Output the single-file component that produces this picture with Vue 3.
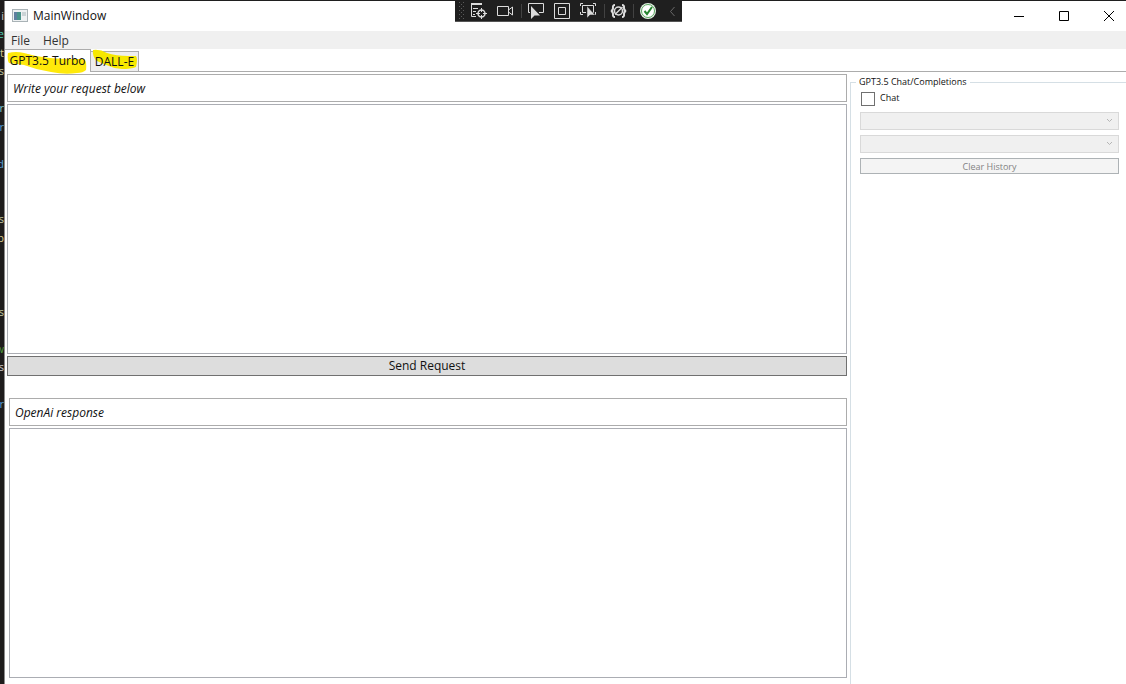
<script setup>
import { ref } from 'vue'

const codeLines = [
  ['i', 'plain'], ['e', 'teal'], ['t', 'sand'], ['s', 'pale'], ['', ''],
  ['r', 'aqua'], ['r', 'blue'], ['', ''], ['d', 'blue'], ['', ''], ['', ''],
  ['s', 'pale'], ['p', 'sand'], ['', ''], ['', ''], ['', ''], ['s', 'pale'],
  ['', ''], ['w', 'green'], ['s', 'plain'], ['', ''], ['r', 'blue'],
]
const tab = ref('gpt')
const request = ref('')
const response = ref('')
const chat = ref(false)
</script>

<template>
  <div class="desktop">
    <div class="editor" aria-hidden="true">
      <div v-for="(line, i) in codeLines" :key="i" class="code" :class="line[1]">{{ line[0] }}</div>
    </div>

    <div class="window">
      <header class="titlebar">
        <svg class="app-icon" width="16" height="14" viewBox="0 0 16 14">
          <rect x="0.5" y="0.5" width="15" height="12" fill="#eef1f2" stroke="#a9b2b6" />
          <rect x="2" y="3" width="7" height="8" fill="#4a938a" />
          <rect x="2" y="3" width="3" height="8" fill="#5f7f9f" />
          <rect x="10" y="3" width="4" height="4" fill="#cbd3d6" />
        </svg>
        <span class="title">MainWindow</span>
        <div class="window-buttons">
          <button type="button" aria-label="Minimize">
            <svg width="12" height="12" viewBox="0 0 12 12"><path d="M1 6.5H11" /></svg>
          </button>
          <button type="button" aria-label="Maximize">
            <svg width="12" height="12" viewBox="0 0 12 12"><path d="M1.5 1.5H10.500V10.500H1.500Z" /></svg>
          </button>
          <button type="button" aria-label="Close">
            <svg width="12" height="12" viewBox="0 0 12 12"><path d="M1 1L11 11M11 1L1 11" /></svg>
          </button>
        </div>
      </header>

      <nav class="menu">
        <button type="button">File</button>
        <button type="button">Help</button>
      </nav>

      <div class="tabs" role="tablist">
        <button type="button" role="tab" class="tab tab-gpt" :class="{ active: tab === 'gpt' }" :aria-selected="tab === 'gpt'" @click="tab = 'gpt'">
          <svg class="marker marker-gpt" width="80" height="24" viewBox="0 0 80 24">
            <path d="M1 3Q9 1 17 3L29 6Q46 9 61 9L77 9Q80 11 79 20Q76 23 70 23Q58 25 44 22Q30 20 17 15L2 13Q0 10 1 3Z" />
          </svg>
          <span>GPT3.5 Turbo</span>
        </button>
        <button type="button" role="tab" class="tab tab-dalle" :class="{ active: tab === 'dalle' }" :aria-selected="tab === 'dalle'" @click="tab = 'dalle'">
          <svg class="marker marker-dalle" width="46" height="21" viewBox="0 0 46 21">
            <path d="M1 1Q8 0 15 4Q24 7 36 7L44 7Q46 10 44 18Q39 20 30 20Q23 20 17 17Q11 15 5 12Q0 8 1 1Z" />
          </svg>
          <span>DALL-E</span>
        </button>
      </div>

      <main class="content">
        <section class="left">
          <label class="caption" for="request">Write your request below</label>
          <textarea id="request" v-model="request"></textarea>
          <button type="button" class="send">Send Request</button>
          <div class="answer">
            <label class="caption" for="response">OpenAi response</label>
            <textarea id="response" v-model="response" readonly></textarea>
          </div>
        </section>

        <fieldset class="options">
          <legend>GPT3.5 Chat/Completions</legend>
          <div class="rows">
            <label class="check"><input v-model="chat" type="checkbox"><span>Chat</span></label>
            <div v-for="name in ['Model', 'History']" :key="name" class="combo">
              <select :aria-label="name" disabled></select>
              <svg width="7" height="5" viewBox="0 0 7 5"><path d="M1 1L3.500 3.500L6 1" /></svg>
            </div>
            <button type="button" class="clear" disabled>Clear History</button>
          </div>
        </fieldset>
      </main>
    </div>

    <div class="debugbar" role="toolbar" aria-label="Debug tools">
      <svg width="227" height="21" viewBox="0 0 227 21" fill="none" stroke="#dcdcdc">
        <path d="M4.500 2V20M8.500 2V20" stroke="#5a5a5a" stroke-dasharray="1 3" />
        <path d="M6.500 4V20" stroke="#5a5a5a" stroke-dasharray="1 3" />
        <path d="M16 4H27" stroke-width="2" />
        <path d="M16.500 5V16.500H21M18 8.500H23M18 11.500H21M18 14.500H20" />
        <circle cx="26.500" cy="13.500" r="3.500" stroke-width="1.500" />
        <path d="M26.500 8V12M26.500 15V19M21 13.500H25M28 13.500H32" />
        <path d="M42.500 6.500H53.500V15.500H42.500ZM53.500 10L57.500 7V15L53.500 12" />
        <path d="M66.500 4V18M149.500 4V18M178.500 4V18" stroke="#424242" />
        <path d="M75 12.500H73.500V3.500H88.500V12.500H84" />
        <path d="M76 6V19L79.500 15.500H85Z" fill="#dcdcdc" stroke="none" />
        <path d="M99.500 3.500H114.500V18.500H99.500ZM103.500 7.500H110.500V14.500H103.500Z" />
        <path d="M125.500 6V3.500H128M138 3.500H140.500V6M125.500 12V14.500H128M140.500 12V14.500H139M131 12.500H127.500V5.500H138.500V12.500H137" />
        <path d="M132 6V18L135 15H140Z" fill="#dcdcdc" stroke="#1f1f1f" stroke-width="0.500" />
        <path d="M160 5Q157.500 5 158 8Q158 10.500 156 11Q158 11.500 158 14Q157.500 17 160 17M167 5Q169.500 5 169 8Q169 10.500 171 11Q169 11.500 169 14Q169.500 17 167 17" stroke-width="2" />
        <circle cx="163.500" cy="11" r="4" stroke-width="1.500" />
        <path d="M160 14.500L167.500 7" stroke-width="1.500" />
        <circle cx="193" cy="11" r="8" fill="#e3f1e3" stroke="none" />
        <circle cx="193" cy="11" r="6.500" fill="#fff" stroke="#5aa660" />
        <path d="M189.500 11L192 14L197 7" stroke="#26852f" stroke-width="2" />
        <path d="M219.500 7L215.500 11.500L219.500 16" stroke="#6a6a6a" />
      </svg>
    </div>
  </div>
</template>

<style>
body {
  margin: 0;
}
</style>

<style scoped>
.desktop {
  position: relative;
  display: flex;
  height: 100vh;
  box-sizing: border-box;
  border-top: 1px solid #1f1f1f;
  overflow: hidden;
  font: 12px/16px "Segoe UI", "Open Sans", "Noto Sans", sans-serif;
  color: #111;
}

.desktop *,
.desktop *::before {
  box-sizing: border-box;
}

button,
textarea,
select,
input {
  margin: 0;
  padding: 0;
  font: inherit;
  color: inherit;
  border-radius: 0;
}

.editor {
  flex: 0 0 4px;
  padding-top: 6px;
  background: #1e1c1c;
  overflow: hidden;
}

.code {
  display: flex;
  justify-content: flex-end;
  height: 18px;
  font: 11px/18px "Open Sans", "Noto Sans", sans-serif;
}

.code:nth-child(even) {
  height: 19px;
}

.plain { color: #c8c8c8; }
.teal { color: #4ec9b0; }
.sand { color: #d7c98f; }
.pale { color: #c2cba0; }
.aqua { color: #7fc4cf; }
.blue { color: #569cd6; }
.green { color: #4e9a3c; }

.window {
  flex: 1;
  min-width: 0;
  display: flex;
  flex-direction: column;
  border-left: 1px solid #8c8c8c;
  background: #fff;
}

.titlebar {
  display: flex;
  align-items: center;
  height: 30px;
  padding-left: 7px;
}

.title {
  flex: 1;
  margin-left: 5px;
}

.window-buttons {
  display: flex;
}

.window-buttons button {
  display: grid;
  place-items: center;
  width: 45px;
  height: 30px;
  border: 0;
  background: none;
}

.window-buttons button:last-child {
  width: 46px;
  margin-right: -6px;
}

.window-buttons path {
  fill: none;
  stroke: #000;
}

.menu {
  display: flex;
  gap: 13px;
  height: 18px;
  padding-left: 6px;
  background: #f0f0f0;
}

.menu button {
  height: 20px;
  border: 0;
  background: none;
  line-height: 20px;
  color: #333;
}

.tabs {
  display: flex;
  align-items: flex-end;
  height: 23px;
  border-bottom: 1px solid #acacac;
}

.tab {
  position: relative;
  height: 20px;
  border: 1px solid #acacac;
  border-left: 0;
  border-bottom: 0;
  background: #eee;
  line-height: 18px;
  white-space: nowrap;
}

.tab-gpt {
  width: 86px;
}

.tab-dalle {
  width: 48px;
}

.tab.active {
  height: 23px;
  margin-bottom: -1px;
  background: #fff;
  z-index: 1;
}

.tab span {
  position: relative;
}

.marker {
  position: absolute;
  fill: #ffe90a;
}

.marker-gpt {
  left: 2px;
  top: 0;
}

.marker-dalle {
  left: 1px;
  top: -3px;
  fill: #f6e800;
}

.content {
  flex: 1;
  min-height: 0;
  display: grid;
  grid-template-columns: minmax(0, 842fr) minmax(0, 276fr);
  gap: 3px;
}

.left {
  min-width: 0;
  min-height: 0;
  display: flex;
  flex-direction: column;
  gap: 2px;
  padding: 2px 0 6px 2px;
}

.caption {
  flex: none;
  height: 28px;
  padding-left: 5px;
  border: 1px solid #acacac;
  line-height: 27px;
  font-style: italic;
}

textarea {
  display: block;
  width: 100%;
  flex: 1 1 2px;
  min-height: 0;
  border: 1px solid #abadb3;
  background: #fff;
  resize: none;
  outline: 0;
}

.send {
  flex: none;
  height: 20px;
  border: 1px solid #707070;
  background: #ddd;
  line-height: 18px;
}

.answer {
  flex: 1 1 32px;
  min-height: 0;
  display: flex;
  flex-direction: column;
  gap: 2px;
  margin-top: 20px;
  padding-left: 2px;
}

.options {
  min-width: 0;
  margin: 4px 0 -1px;
  padding: 0 7px 0 9px;
  border: 1px solid #d5dfe5;
  border-right: 0;
  font-size: 9px;
  line-height: 12px;
}

legend {
  margin-left: -4px;
  padding: 0 3px;
}

.rows {
  display: flex;
  flex-direction: column;
  gap: 5px;
  padding-top: 4px;
}

.check {
  display: flex;
  gap: 5px;
  height: 15px;
}

.check input {
  width: 14px;
  height: 14px;
  margin: 0 0 0 1px;
  appearance: none;
  border: 1px solid #707070;
  background: #fff;
}

.check input:checked {
  background: #707070;
}

.combo {
  position: relative;
  height: 18px;
}

.combo select {
  display: block;
  width: 100%;
  height: 18px;
  appearance: none;
  border: 1px solid #d9d9d9;
  background: #f0f0f0;
  opacity: 1;
}

.combo svg {
  position: absolute;
  right: 6px;
  top: 6px;
  fill: none;
  stroke: #b5b5b5;
}

.clear {
  height: 16px;
  border: 1px solid #adb2b5;
  background: #f4f4f4;
  color: #838383;
  line-height: 15px;
}

.debugbar {
  position: absolute;
  left: 455px;
  top: -1px;
  height: 22px;
  background: #1f1f1f;
  border-bottom: 1px solid #555;
}

.debugbar svg {
  display: block;
}
</style>
